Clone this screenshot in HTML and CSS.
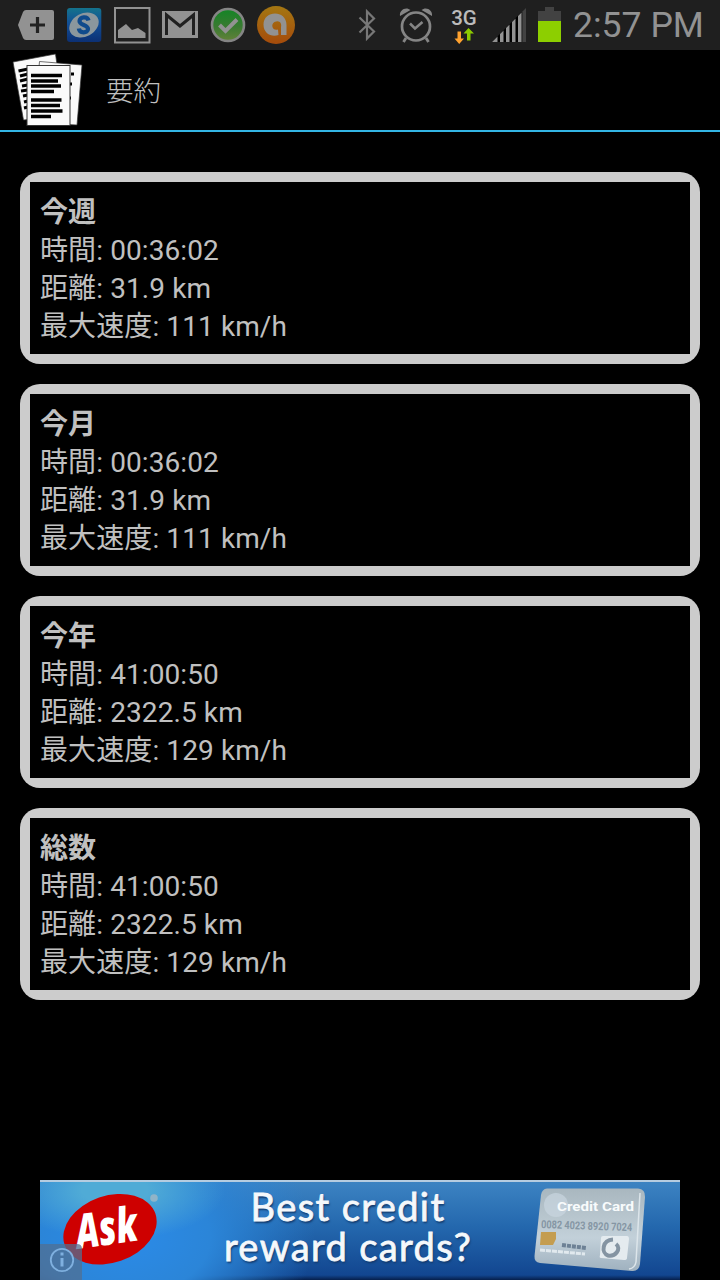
FILE: index.html
```html
<!DOCTYPE html>
<html lang="ja">
<head>
<meta charset="UTF-8">
<title>要約</title>
<link rel="stylesheet" href="styles.css">
</head>
<body>
<div class="statusbar">
  <div class="notifications">
    <svg width="48" height="50" viewBox="0 0 48 50">
      <path d="M14 10H40Q42 10 42 12V38Q42 40 40 40H14Q12 40 11 38L6 25L11 12Q12 10 14 10Z" fill="#929292"/>
      <path d="M18 25H33M25.5 17V33" stroke="#222" stroke-width="3.2"/>
    </svg>
    <svg width="48" height="50" viewBox="0 0 48 50">
      <defs><linearGradient id="sBlue" x1="0" y1="0" x2="0" y2="1"><stop offset="0" stop-color="#14738c"/><stop offset=".45" stop-color="#124f96"/><stop offset="1" stop-color="#0c3074"/></linearGradient></defs>
      <rect x="7" y="8" width="34.3" height="34" rx="3" fill="url(#sBlue)"/>
      <ellipse cx="24" cy="25" rx="15.5" ry="11.5" transform="rotate(-28 24 25)" fill="#8b979d"/>
      <path d="M28.5 20.5C27.5 16 19.5 16.5 19.5 21C19.5 25.5 28 24.5 28 29C28 33.5 19.5 33.5 18.8 28.5" fill="none" stroke="#104b8c" stroke-width="4.2"/>
    </svg>
    <svg width="48" height="50" viewBox="0 0 48 50">
      <rect x="7" y="8" width="34.5" height="34.5" fill="none" stroke="#929292" stroke-width="2"/>
      <path d="M10 38V30L18 24L24 30L30 28L37.5 33V38Z" fill="#929292"/>
    </svg>
    <svg width="48" height="50" viewBox="0 0 48 50">
      <rect x="6" y="11" width="36" height="27" fill="#929292"/>
      <path d="M10.5 35V15L24 26L37.5 15V35" fill="none" stroke="#202020" stroke-width="3"/>
    </svg>
    <svg width="48" height="50" viewBox="0 0 48 50">
      <defs><linearGradient id="okGreen" x1="0" y1="0" x2="0" y2="1"><stop offset="0" stop-color="#138525"/><stop offset=".55" stop-color="#397a31"/><stop offset="1" stop-color="#638239"/></linearGradient></defs>
      <circle cx="24" cy="25" r="16" fill="url(#okGreen)" stroke="#858585" stroke-width="2.6"/>
      <path d="M15.5 25L21.5 31L33 19.5" fill="none" stroke="#929292" stroke-width="4"/>
    </svg>
    <svg width="48" height="50" viewBox="0 0 48 50">
      <defs><linearGradient id="orangeFade" x1="0" y1="0" x2="0" y2="1"><stop offset="0" stop-color="#a47712"/><stop offset="1" stop-color="#a54b0b"/></linearGradient></defs>
      <circle cx="24" cy="25" r="19" fill="url(#orangeFade)"/>
      <path d="M26 29.5C21 31.5 18 24.5 22.5 22C27.5 19.5 30 23.5 29 27V35H34.5V25C34.5 9.500 11.500 10 11.500 24.500C11.500 34 20 37.500 26.500 35Z" fill="#929292"/>
    </svg>
  </div>
  <div class="system">
    <svg width="52" height="50" viewBox="0 0 52 50">
      <path d="M19.500 17.500L34 31.500L27 38.500V11.500L34 18.500L19.500 32.500" fill="none" stroke="#777" stroke-width="2.2"/>
    </svg>
    <svg width="48" height="50" viewBox="0 0 48 50">
      <g fill="none" stroke="#858585">
        <circle cx="24" cy="26.500" r="14" stroke-width="2.700"/>
        <path d="M18 23.500L23 28.500L30.500 22" stroke-width="2.500"/>
        <path d="M14 38L11.500 42M34 38L36.500 42" stroke-width="2.800"/>
      </g>
      <path d="M8 16C7 10 14 6 18.500 10ZM40 16C41 10 34 6 29.500 10Z" fill="#858585"/>
    </svg>
    <div class="network">
      <span>3G</span>
      <svg width="24" height="18" viewBox="0 0 24 18">
        <path d="M5.500 4.500H9V11.500H12L7.200 17L2.500 11.500H5.500Z" fill="#ffa22f"/>
        <path d="M15 13.500V6.500H11.500L16.500 1L22 6.500H18.500V13.500Z" fill="#8dcb00"/>
      </svg>
    </div>
    <svg width="44" height="50" viewBox="0 0 44 50">
      <path d="M4 42L33.500 12V42Z" fill="#000"/>
      <path d="M4 42L9.500 36.500V42ZM12 34L15.500 30.500V42H12ZM18 28L21.500 24.500V42H18ZM24 22L27.500 18.500V42H24ZM30 16L33.500 12.500V42H30Z" fill="#929292"/>
      <path d="M34.500 11.500L38 8V42H34.500Z" fill="#424242"/>
    </svg>
    <svg width="36" height="50" viewBox="0 0 36 50">
      <path d="M6 11H13V7H22V11H29V21H6Z" fill="#424242"/>
      <rect x="6" y="21" width="23" height="21" fill="#8dcf00"/>
    </svg>
    <span class="clock">2:57 PM</span>
  </div>
</div>

<div class="titlebar">
  <svg width="96" height="80" viewBox="0 0 96 80">
    <g stroke="#333" stroke-width=".7" fill="#fafafa">
      <path d="M13 12L55.500 4L64 66L23.500 70Z"/>
      <path d="M39.500 11.500L82 15L77 75L34 73Z"/>
    </g>
    <path d="M18.500 21L28 19M20 26L28 24M20 31L28 29M22 36L28 35M21 41L28 40M23 46L28 45M24 52L28 51M24 58L28 57M71 24H74M70 34H72M70 48H71" stroke="#000" stroke-width="3.200"/>
    <rect x="27" y="15.500" width="43" height="60" fill="#fafafa" stroke="#333" stroke-width="1"/>
    <path d="M31 25.500H62M31 31H58M31 36H61M31 41.500H54M31 50H61.500M31 55.500H60M31 61H62.500M31 66.500H51" stroke="#000" stroke-width="3.400"/>
  </svg>
  <h1>要約</h1>
</div>

<div class="summary">
  <div class="card">
    <h2>今週</h2>
    <p>時間: 00:36:02</p>
    <p>距離: 31.9 km</p>
    <p>最大速度: 111 km/h</p>
  </div>
  <div class="card">
    <h2>今月</h2>
    <p>時間: 00:36:02</p>
    <p>距離: 31.9 km</p>
    <p>最大速度: 111 km/h</p>
  </div>
  <div class="card">
    <h2>今年</h2>
    <p>時間: 41:00:50</p>
    <p>距離: 2322.5 km</p>
    <p>最大速度: 129 km/h</p>
  </div>
  <div class="card">
    <h2>総数</h2>
    <p>時間: 41:00:50</p>
    <p>距離: 2322.5 km</p>
    <p>最大速度: 129 km/h</p>
  </div>
</div>

<div class="ad">
  <svg class="ask" width="160" height="100" viewBox="0 0 160 100">
    <ellipse cx="70" cy="49.200" rx="48" ry="33.500" transform="rotate(-19 70 49.200)" fill="#ce0000"/>
    <text class="ask-text" transform="translate(38 69) rotate(-8)" textLength="62" lengthAdjust="spacingAndGlyphs">Ask</text>
    <circle cx="114" cy="18" r="3.800" fill="#91b4c8"/>
    <path d="M0 64H37Q42 64 42 69V100H0Z" fill="#526f91" fill-opacity=".75"/>
    <g fill="none" stroke="#7fb0df">
      <circle cx="22" cy="80" r="11.200" stroke-width="1.800"/>
      <path d="M22 78V86.500M22 72.500V75.500" stroke-width="3"/>
    </g>
  </svg>
  <div class="ad-text">
    <div>Best credit</div>
    <div>reward cards?</div>
  </div>
  <svg class="credit" width="130" height="100" viewBox="0 0 130 100">
    <defs><linearGradient id="silver" x1="0" y1="0" x2="0" y2="1"><stop offset="0" stop-color="#a9b7bf"/><stop offset=".6" stop-color="#c2d0d9"/><stop offset="1" stop-color="#9fb1bf"/></linearGradient></defs>
    <path d="M27 8.500H118Q125.500 9 125 17L120 84Q119 91.500 112 91L20 83Q14 82 14.500 76L21 15Q22 9 27 8.500Z" fill="url(#silver)"/>
    <path d="M120 13L116 82Q115 88 109 89" fill="none" stroke="#dce5ea" stroke-width="1.500"/>
    <circle cx="36" cy="25" r="12" fill="#c9d6df" fill-opacity=".7"/>
    <text class="card-name" x="37" y="31" textLength="77" lengthAdjust="spacingAndGlyphs">Credit Card</text>
    <text class="card-number" transform="translate(21 48) rotate(2)" textLength="91" lengthAdjust="spacingAndGlyphs">0082 4023 8920 7024</text>
    <path d="M21 52H36V59L33 65H20Z" fill="#c49d50"/>
    <path d="M42 65L66 68" stroke="#6d8195" stroke-width="4" stroke-dasharray="4 1"/>
    <path d="M20 70L65 74" stroke="#e1e9ee" stroke-width="3" stroke-dasharray="5 1"/>
    <path d="M83 56H107Q109 56 109 59L107 78Q107 80 104 80L81 78Q79 78 80 75L81 58Q81 56 83 56Z" fill="#e4ebef"/>
    <path d="M93 59.500C82 60 81 73 88 75.500C95 77 102 69 96 64" fill="none" stroke="#8494a2" stroke-width="4"/>
  </svg>
</div>
</body>
</html>
```

FILE: styles.css
```css
* { box-sizing: border-box; margin: 0; padding: 0; }
body { width: 720px; height: 1280px; display: flex; flex-direction: column; background-color: #000; color: #c0c0c0; font-family: Roboto, "Noto Sans CJK JP", sans-serif; overflow: hidden; }
svg { display: block; flex: none; }

.statusbar { height: 50px; display: flex; justify-content: space-between; padding: 0 16px 0 12px; background-color: #1f1f1f; }
.notifications, .system { display: flex; }
.network { width: 48px; height: 50px; display: flex; flex-direction: column; align-items: center; padding-top: 8px; }
.network span { font-size: 20.5px; line-height: 21px; font-weight: 500; color: #bbb; }
.network svg { margin-top: -2px; }
.clock { width: 136px; padding-left: 5px; font-size: 35.6px; line-height: 50px; color: #929292; white-space: nowrap; }

.titlebar { height: 82px; display: flex; align-items: center; border-bottom: 2px solid #33b5e5; }
.titlebar h1 { margin-left: 10px; padding-top: 4px; font-size: 27.5px; line-height: 40px; font-weight: 300; }

.summary { flex: 1; display: flex; flex-direction: column; gap: 20px; padding: 40px 20px 0; }
/* the frame is rounded outside and square inside, so it is a background and not a border */
.card { height: 192px; border-radius: 20px; padding: 22px 20px 18px; background: linear-gradient(#000, #000) center / 660px 172px no-repeat #ccc; }
.card h2 { font-size: 28px; line-height: 38px; font-weight: 700; }
.card p { font-size: 28px; line-height: 38px; font-weight: 400; letter-spacing: .1px; }

.ad { width: 640px; height: 100px; margin: 0 auto; display: flex; border-top: 2px solid #b5cce0; background: radial-gradient(ellipse 110px 50px at 75px 8px, #50abd6 30%, transparent 100%), radial-gradient(ellipse 190px 130px at 85px 55px, #2b8be8 0, #2b85d8 45%, transparent 100%), linear-gradient(#3c83c2, #2468ae 45%, #124690 95%, #061f4b); }
.ad svg { margin-top: -2px; }
.ask-text { font-family: "Open Sans", sans-serif; font-size: 48px; font-weight: 800; font-style: italic; fill: #fff; }
.ad-text { width: 296px; padding-top: 4px; text-align: center; font-family: Lato, sans-serif; font-size: 38px; line-height: 40px; font-weight: 400; letter-spacing: 1.4px; -webkit-text-stroke: .8px #f5f8fb; color: #f5f8fb; text-shadow: 1px 2px 2px #12396b; white-space: nowrap; }
.credit { margin-left: 24px; }
.card-name { font-size: 13px; font-weight: 700; fill: #f8fbfc; }
.card-number { font-size: 11px; font-weight: 700; fill: #8596a4; }
```
